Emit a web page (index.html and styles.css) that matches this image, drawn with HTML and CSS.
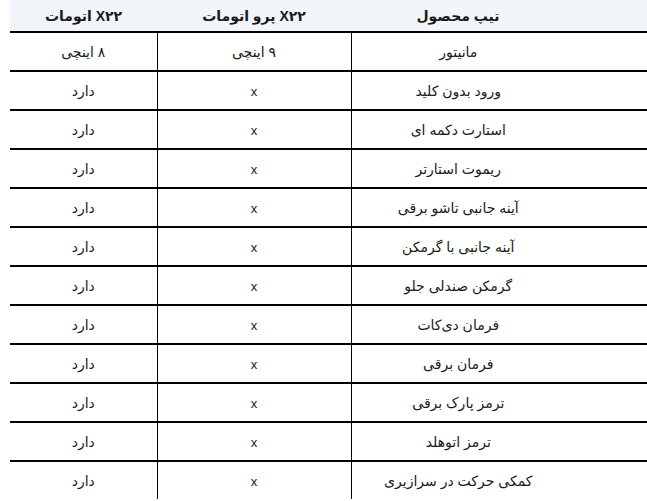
FILE: index.html
```html
<!DOCTYPE html>
<html lang="fa" dir="rtl">
<head>
<meta charset="utf-8">
<link rel="stylesheet" href="styles.css">
</head>
<body>
<table class="spec">
  <thead>
    <tr>
      <th class="c-name">تیپ محصول</th>
      <th class="c-pro">X۲۲ پرو اتومات</th>
      <th class="c-auto">X۲۲ اتومات</th>
    </tr>
  </thead>
  <tbody>
    <tr><td class="c-name">مانیتور</td><td class="c-pro">۹ اینچی</td><td class="c-auto">۸ اینچی</td></tr>
    <tr><td class="c-name">ورود بدون کلید</td><td class="c-pro"><span class="mark">x</span></td><td class="c-auto">دارد</td></tr>
    <tr><td class="c-name">استارت دکمه ای</td><td class="c-pro"><span class="mark">x</span></td><td class="c-auto">دارد</td></tr>
    <tr><td class="c-name">ریموت استارتر</td><td class="c-pro"><span class="mark">x</span></td><td class="c-auto">دارد</td></tr>
    <tr><td class="c-name">آینه جانبی تاشو برقی</td><td class="c-pro"><span class="mark">x</span></td><td class="c-auto">دارد</td></tr>
    <tr><td class="c-name">آینه جانبی با گرمکن</td><td class="c-pro"><span class="mark">x</span></td><td class="c-auto">دارد</td></tr>
    <tr><td class="c-name">گرمکن صندلی جلو</td><td class="c-pro"><span class="mark">x</span></td><td class="c-auto">دارد</td></tr>
    <tr><td class="c-name">فرمان دی‌کات</td><td class="c-pro"><span class="mark">x</span></td><td class="c-auto">دارد</td></tr>
    <tr><td class="c-name">فرمان برقی</td><td class="c-pro"><span class="mark">x</span></td><td class="c-auto">دارد</td></tr>
    <tr><td class="c-name">ترمز پارک برقی</td><td class="c-pro"><span class="mark">x</span></td><td class="c-auto">دارد</td></tr>
    <tr><td class="c-name">ترمز اتوهلد</td><td class="c-pro"><span class="mark">x</span></td><td class="c-auto">دارد</td></tr>
    <tr><td class="c-name">کمکی حرکت در سرازیری</td><td class="c-pro"><span class="mark">x</span></td><td class="c-auto">دارد</td></tr>
  </tbody>
</table>
</body>
</html>
```
FILE: styles.css
```css
html, body {
  margin: 0;
  padding: 0;
  background: #ffffff;
  overflow: hidden;
}
body {
  font-family: "Liberation Sans", "DejaVu Sans", sans-serif;
  font-size: 14px;
  color: #1a1a1a;
  direction: rtl;
}
.spec {
  border-collapse: collapse;
  table-layout: fixed;
  width: 637px;
  margin-left: 10px;
}
.spec th,
.spec td {
  padding: 0;
  text-align: center;
  vertical-align: middle;
  line-height: 1;
}
.spec th {
  height: 31px;
  background: #f2f5fa;
  font-weight: bold;
  font-size: 14px;
  border-bottom: 2px solid #000;
}
.spec td {
  height: 37px;
  border-bottom: 2px solid #000;
}
.spec tbody tr:last-child td {
  border-bottom: none;
}
.spec .mark {
  font-size: 13px;
}
.spec .c-name {
  width: 296px;
  padding-right: 82px;
  box-sizing: border-box;
}
.spec .c-pro {
  width: 194px;
}
.spec .c-auto {
  width: 147px;
}
.spec td.c-name,
.spec td.c-pro {
  border-left: 1px solid #000;
}
```
